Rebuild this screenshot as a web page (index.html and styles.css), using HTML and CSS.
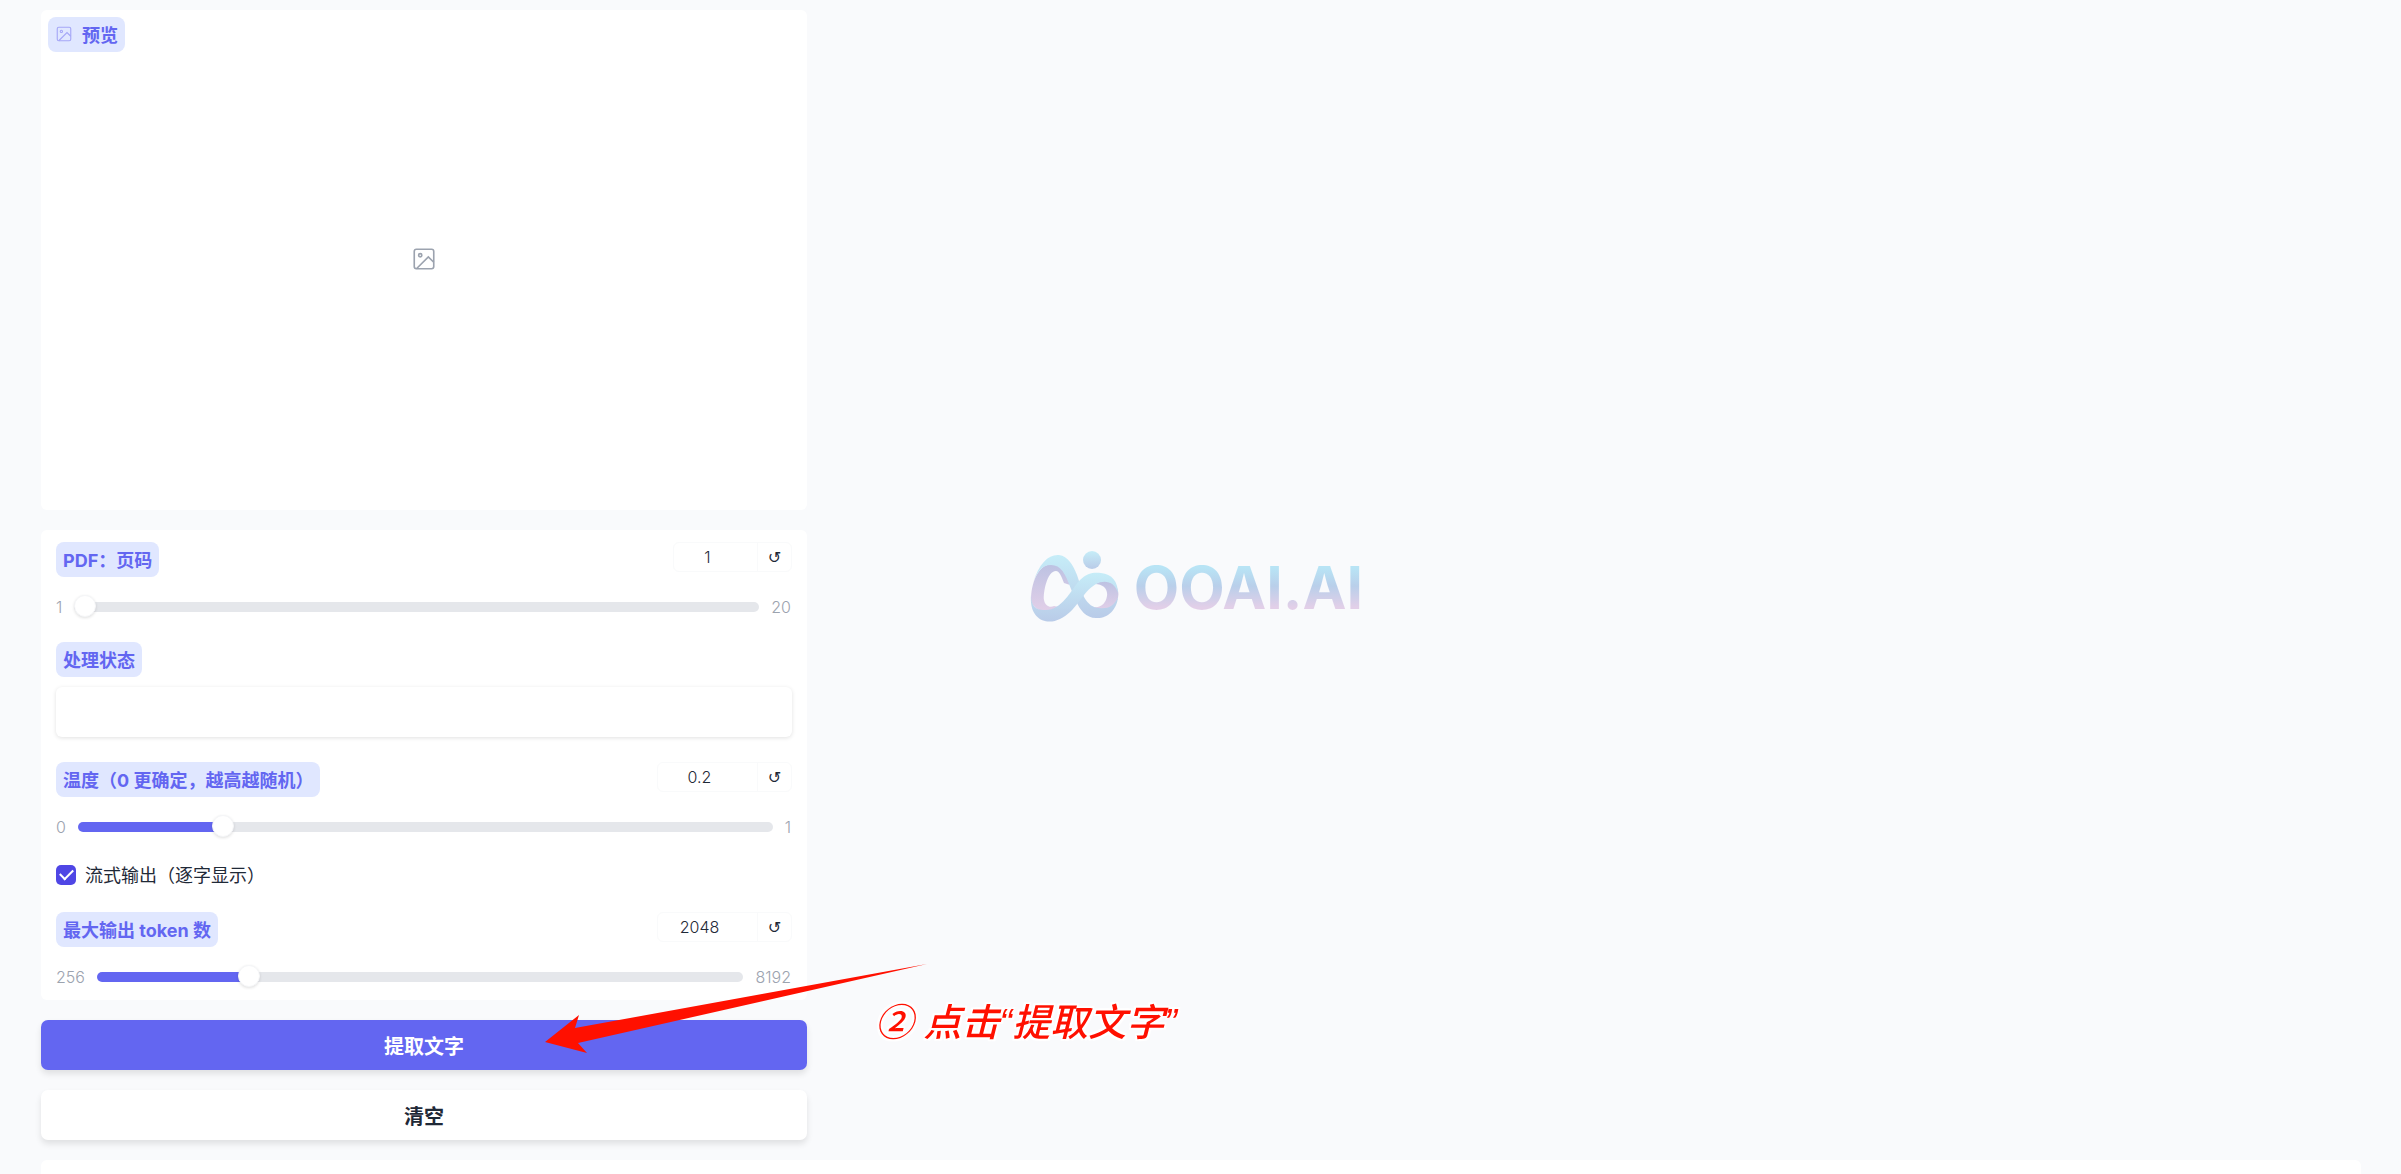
FILE: index.html
```
<!DOCTYPE html>
<html lang="zh-CN">
  <head>
    <meta charset="utf-8">
    <title>OOAI.AI</title>
    <link rel="stylesheet" href="styles.css">
  </head>
  <body>
    <main class="page">
      <div class="columns">
        <div class="column">
          <section class="preview">
            <h2 class="tag tag--icon">
              <svg class="tag__icon" viewBox="0 0 24 24">
                <rect x="3" y="3" width="18" height="18" rx="2"/>
                <circle cx="8.5" cy="8.5" r="1.5"/>
                <path d="M5 21L16 10l5 5"/>
              </svg>
              预览
            </h2>
            <div class="preview__empty">
              <svg class="preview__icon" viewBox="0 0 24 24">
                <rect x="3" y="3" width="18" height="18" rx="2"/>
                <circle cx="8.5" cy="8.5" r="1.5"/>
                <path d="M5 21L16 10l5 5"/>
              </svg>
            </div>
          </section>

          <section class="settings">
            <div class="field">
              <div class="field__head">
                <label class="tag" for="page">PDF：页码</label>
                <div class="number number--short">
                  <input class="number__input" id="page" type="text" inputmode="numeric" value="1">
                  <button class="number__reset" type="button" aria-label="重置">↺</button>
                </div>
              </div>
              <div class="slider">
                <span>1</span>
                <input class="slider__range" style="--fill: 0%" type="range" min="1" max="20" value="1" aria-label="PDF：页码">
                <span>20</span>
              </div>
            </div>

            <div class="field field--text">
              <label class="tag" for="status">处理状态</label>
              <input class="textbox" id="status" type="text" readonly>
            </div>

            <div class="field">
              <div class="field__head">
                <label class="tag" for="temperature">温度（0 更确定，越高越随机）</label>
                <div class="number">
                  <input class="number__input" id="temperature" type="text" inputmode="decimal" value="0.2">
                  <button class="number__reset" type="button" aria-label="重置">↺</button>
                </div>
              </div>
              <div class="slider">
                <span>0</span>
                <input class="slider__range" style="--fill: 20%" type="range" min="0" max="1" step="0.1" value="0.2" aria-label="温度">
                <span>1</span>
              </div>
            </div>

            <label class="check">
              <input class="check__box" type="checkbox" checked>
              <span class="check__text">流式输出（逐字显示）</span>
            </label>

            <div class="field">
              <div class="field__head">
                <label class="tag" for="tokens">最大输出 token 数</label>
                <div class="number">
                  <input class="number__input" id="tokens" type="text" inputmode="numeric" value="2048">
                  <button class="number__reset" type="button" aria-label="重置">↺</button>
                </div>
              </div>
              <div class="slider">
                <span>256</span>
                <input class="slider__range" style="--fill: 22.6%" type="range" min="256" max="8192" step="256" value="2048" aria-label="最大输出 token 数">
                <span>8192</span>
              </div>
            </div>
          </section>

          <button class="button button--primary" type="button">提取文字</button>
          <button class="button" type="button">清空</button>
        </div>
      </div>
      <section class="footer-panel"></section>
    </main>

    <div class="watermark">
      <svg class="watermark__logo" viewBox="0 0 90 72">
        <defs>
          <linearGradient id="sky" x1="0" y1="0" x2="0" y2="1">
            <stop offset="0" stop-color="#c6edf8"/>
            <stop offset="1" stop-color="#b9cbe8"/>
          </linearGradient>
          <linearGradient id="inner" x1="0" y1="0" x2="0" y2="1">
            <stop offset="0" stop-color="#bcc2e2"/>
            <stop offset="1" stop-color="#e2cfe8"/>
          </linearGradient>
        </defs>
        <path fill="url(#inner)" d="M1 50C1 32 8 14 21 13C31 12 37 24 40 34L34 32C31 24 29 20 26 20C17 20 13 42 14 49C15 55 20 57 24 55L29 56C20 63 5 62 1 50Z"/>
        <path fill="url(#inner)" d="M65 33C75 27 86 29 88 40C91 54 76 62 66 59L64 56C71 57 76 52 77 45C78 38 73 33 65 33Z"/>
        <path fill="url(#sky)" d="M3 32C9 12 19 3 29 4C38 5 43 14 47 24L50 33L54 46C58 53 63 57 69 57C77 58 84 56 88 46C87 59 77 68 66 67C56 67 50 59 46 50L41 38C35 22 31 14 21 14C12 14 7 21 3 32Z"/>
        <path fill="url(#sky)" d="M1 44C1 55 6 59 14 59C32 60 40 40 50 29C57 22 64 21 71 22C82 23 88 31 88 42C85 31 75 28 66 33C52 41 46 61 30 68C16 75-1 68 1 44Z"/>
        <circle fill="url(#sky)" cx="62" cy="9" r="9"/>
      </svg>
      <span class="watermark__name">OOAI.AI</span>
    </div>

    <svg class="arrow" viewBox="0 0 382 90">
      <path d="M0 78L34 51L30 64L382 0L33 79L42 89Z"/>
    </svg>
    <p class="hint">② 点击“提取文字”</p>
  </body>
</html>
```
FILE: styles.css
```
* {
  box-sizing: border-box;
}
body {
  margin: 0;
  background: #f9fafc;
  color: #1f2937;
  font-family: "Inter", "Noto Sans CJK SC", sans-serif;
  font-size: 16px;
  overflow: hidden;
}
input,
button {
  font: inherit;
  color: inherit;
}
.page {
  padding: 10px 40px 0 41px;
}
.columns {
  display: grid;
  grid-template-columns: 1fr 2fr;
  gap: 22px;
}
.column {
  display: flex;
  flex-direction: column;
  gap: 20px;
}

.preview,
.settings,
.footer-panel {
  background: #fff;
  border-radius: 6px;
}
.preview {
  display: flex;
  flex-direction: column;
  align-items: flex-start;
  height: 500px;
  padding: 7px;
}
.preview__empty {
  flex: 1;
  align-self: stretch;
  display: flex;
  justify-content: center;
  padding-top: 194px;
}
.preview__icon,
.tag__icon {
  fill: none;
  stroke: #9ca3af;
  stroke-width: 1.5;
}
.preview__icon {
  width: 26px;
  height: 26px;
}

.tag {
  display: inline-flex;
  align-items: center;
  height: 35px;
  margin: 0;
  padding: 0 7px 2px;
  border-radius: 8px;
  background: #e0e7ff;
  color: #6366f1;
  font-size: 18px;
  font-weight: 700;
  white-space: nowrap;
}
.tag--icon {
  gap: 9px;
}
.tag__icon {
  width: 18px;
  height: 18px;
  stroke: #a5a7f7;
}

.settings {
  display: flex;
  flex-direction: column;
  gap: 25px;
  padding: 12px 15px 13px;
}
.field {
  display: flex;
  flex-direction: column;
  gap: 20px;
}
.field--text {
  align-items: flex-start;
  gap: 10px;
}
.field__head {
  display: flex;
  justify-content: space-between;
  align-items: flex-start;
}
.number {
  display: flex;
  width: 135px;
  height: 30px;
  border: 1px solid #f9fafb;
  border-radius: 6px;
}
.number--short {
  width: 119px;
}
.number__input {
  flex: 1;
  min-width: 0;
  padding: 0 16px 0 0;
  border: 0;
  background: none;
  font-weight: 300;
  text-align: center;
}
.number__reset {
  width: 34px;
  padding: 0;
  border: 0;
  border-left: 1px solid #f9fafb;
  background: none;
  font-family: "DejaVu Sans", sans-serif;
}
.textbox {
  width: 100%;
  height: 50px;
  padding: 0 12px;
  border: 0;
  border-radius: 6px;
  background: #fff;
  box-shadow: 0 1px 4px rgba(0, 0, 0, .12);
}

.slider {
  display: flex;
  align-items: center;
  gap: 12px;
  height: 20px;
  padding-right: 1px;
  color: #9ca3af;
  font-weight: 300;
}
.slider__range {
  flex: 1;
  min-width: 0;
  height: 10px;
  margin: 0;
  border-radius: 5px;
  background: linear-gradient(to right, #6366f1 var(--fill), #e5e7eb var(--fill));
  -webkit-appearance: none;
  appearance: none;
}
.slider__range::-webkit-slider-runnable-track {
  height: 10px;
}
.slider__range::-webkit-slider-thumb {
  -webkit-appearance: none;
  width: 22px;
  height: 22px;
  margin-top: -7px;
  border: 1px solid #f5f6f8;
  border-radius: 50%;
  background: #fff;
  box-shadow: 0 1px 3px rgba(0, 0, 0, .12);
}

.check {
  display: flex;
  align-items: center;
  gap: 9px;
  height: 25px;
  font-size: 18px;
}
.check__text {
  padding-bottom: 2px;
}
.check__box {
  display: grid;
  place-items: center;
  width: 20px;
  height: 20px;
  margin: 0;
  border-radius: 5px;
  background: #4f46e5;
  -webkit-appearance: none;
  appearance: none;
}
.check__box:checked::before {
  content: "";
  width: 11px;
  height: 6px;
  margin-bottom: 3px;
  border: solid #fff;
  border-width: 0 0 2px 2px;
  transform: rotate(-45deg);
}

.button {
  height: 50px;
  border: 0;
  border-radius: 7px;
  background: #fff;
  box-shadow: 0 4px 6px rgba(0, 0, 0, .1);
  font-size: 20px;
  font-weight: 700;
}
.button--primary {
  background: #6366f1;
  color: #fff;
}
.footer-panel {
  height: 60px;
  margin-top: 20px;
}

.watermark {
  position: fixed;
  inset: 0;
  display: flex;
  align-items: center;
  justify-content: center;
  gap: 14px;
  padding-right: 8px;
  pointer-events: none;
}
.watermark__logo {
  width: 90px;
  height: 72px;
}
.watermark__name {
  background: linear-gradient(#b8e4f5 22%, #b9cfea 48%, #e2cfe8 78%);
  -webkit-background-clip: text;
  background-clip: text;
  color: transparent;
  font-size: 59px;
  font-weight: 700;
}

.arrow {
  position: absolute;
  left: 545px;
  top: 964px;
  width: 382px;
  height: 90px;
  fill: #ff1000;
  pointer-events: none;
}
.hint {
  position: absolute;
  left: 875px;
  top: 992px;
  margin: 0;
  color: #ff1000;
  font-family: "Liberation Sans", "Noto Sans CJK SC", sans-serif;
  font-size: 38px;
  font-style: italic;
  font-weight: 500;
  white-space: nowrap;
  text-shadow: 0 0 3px #fff, 2px 2px 1px #fff, -2px -2px 1px #fff, 2px -2px 1px #fff, -2px 2px 1px #fff;
}
```
